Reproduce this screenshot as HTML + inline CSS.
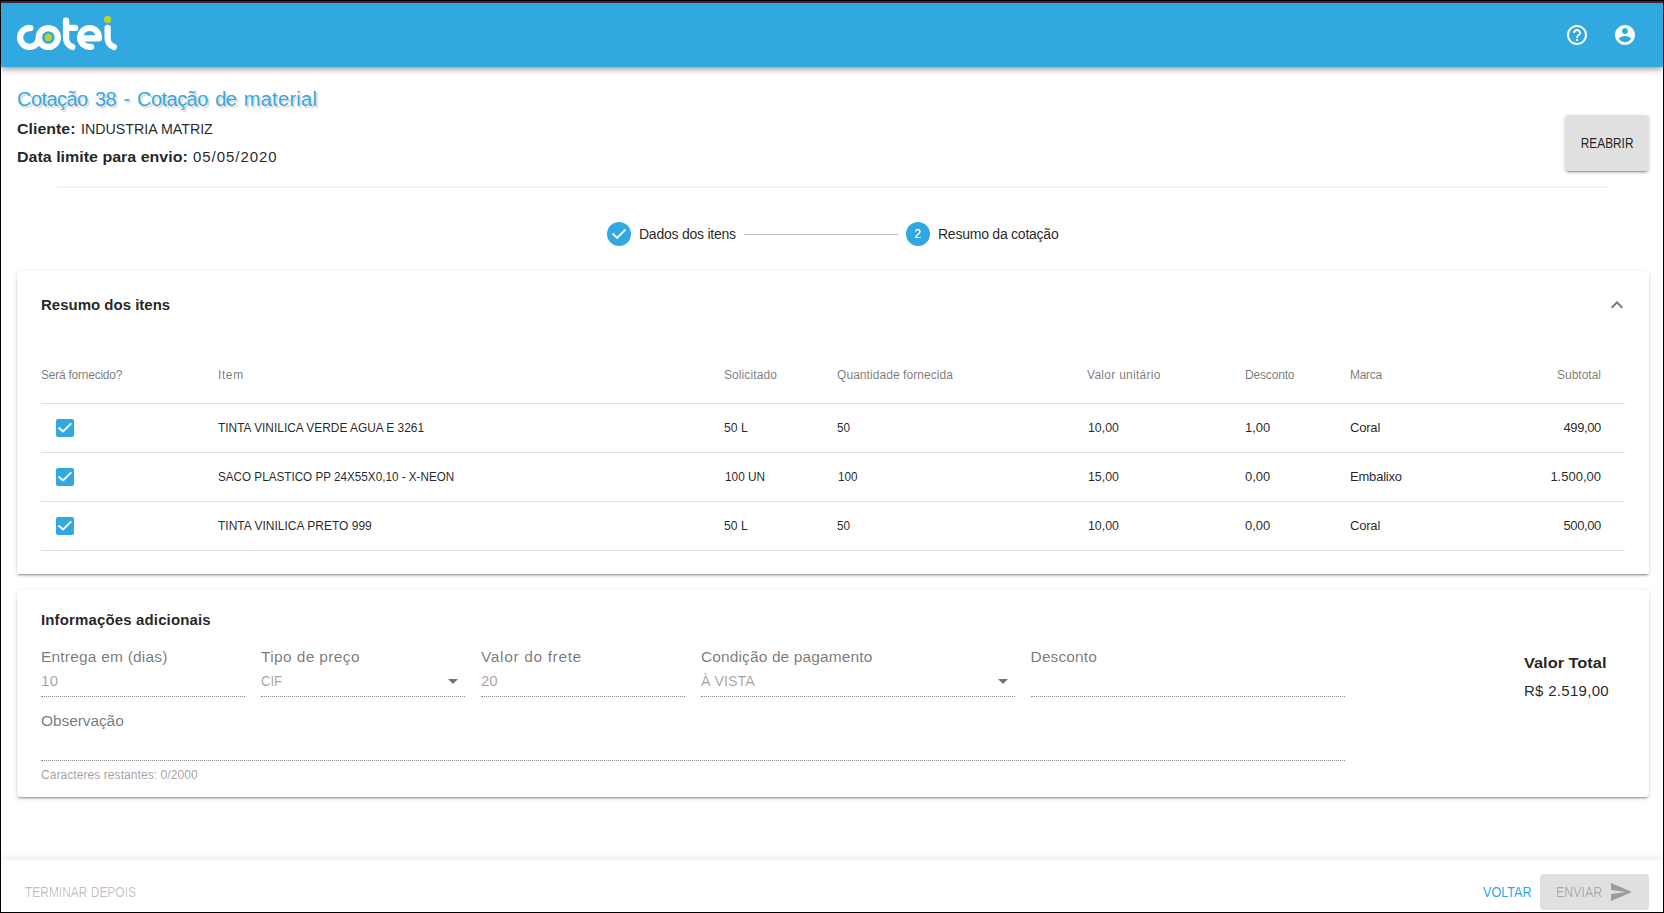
<!DOCTYPE html>
<html lang="pt-BR">
<head>
<meta charset="utf-8">
<title>Cotei - Cotação 38</title>
<style>
*{box-sizing:border-box;margin:0;padding:0}
html,body{width:1664px;height:913px;overflow:hidden;background:#fff}
body{position:relative;font-family:"Liberation Sans",sans-serif;color:rgba(0,0,0,.87);-webkit-font-smoothing:antialiased}
.abs{position:absolute}
.t{position:absolute;white-space:nowrap;line-height:20px;height:20px;transform-origin:0 50%}
/* window frame */
.fr{position:absolute;background:#000;z-index:50}
/* header */
#hdr{position:absolute;left:1px;top:3px;width:1662px;height:64px;background:#31a9e0;z-index:10;
 box-shadow:0 2px 4px -1px rgba(0,0,0,.2),0 4px 5px 0 rgba(0,0,0,.14),0 1px 10px 0 rgba(0,0,0,.12)}
#hdr svg{position:absolute}
/* title */
h1{font-weight:400;font-size:20px;color:#35a8e0;text-shadow:2px 2px 1px rgba(0,0,0,.16)}
.f15{font-size:15px}.f14{font-size:14px}.f13{font-size:13px}.f12{font-size:12px}.f16{font-size:16px}
b{font-weight:700}
hr{position:absolute;left:57px;top:186px;width:1552px;height:2px;border:0;background:#f3f3f3}
.btn{position:absolute;background:#e0e0e0;border-radius:4px;font-size:14px;text-align:center}
#reabrir{left:1565px;top:115px;width:84px;height:56px;line-height:56px;
 box-shadow:0 3px 1px -2px rgba(0,0,0,.2),0 2px 2px 0 rgba(0,0,0,.14),0 1px 5px 0 rgba(0,0,0,.12)}
/* stepper */
.dot{position:absolute;width:24px;height:24px;border-radius:50%;background:#31a9e0;color:#fff;text-align:center;font-size:12px;line-height:24px}
.sline{position:absolute;left:744px;top:234px;width:154px;height:1px;background:#bdbdbd}
/* cards */
.card{position:absolute;left:17px;width:1632px;background:#fff;border-radius:4px;
 box-shadow:0 3px 1px -2px rgba(0,0,0,.2),0 2px 2px 0 rgba(0,0,0,.14),0 1px 5px 0 rgba(0,0,0,.12)}
#c1{top:271px;height:303px;border-radius:4px 4px 1px 1px}
#c2{top:590px;height:207px}
#c2 .in{position:absolute;left:0;top:1px;width:1632px;height:206px}
.card .t,.card .abs,.card svg{position:absolute}
/* table */
table{position:absolute;left:24px;top:76px;width:1584px;border-collapse:collapse;table-layout:fixed}
th{height:56px;font-weight:400;font-size:12px;color:rgba(0,0,0,.54);text-align:left;border-bottom:1px solid #dfdfdf;padding:0;white-space:nowrap}
td{height:49px;font-size:13px;text-align:left;border-bottom:1px solid #dfdfdf;padding:0;white-space:nowrap}
th.r,td.r{text-align:right;padding-right:24px}
.cb{display:block;width:18px;height:18px;margin-left:15px;border-radius:2px;background:#31a9e0}
.cb svg{position:static;display:block}
.s{display:inline-block;transform-origin:0 50%;white-space:nowrap}
.r .s{transform-origin:100% 50%}
/* form */
.lbl{color:rgba(0,0,0,.54);font-size:15.5px}
.val{color:rgba(0,0,0,.38);font-size:15px}
.ul{position:absolute;height:0;border-top:1px dotted rgba(0,0,0,.45)}
.arr{position:absolute;width:0;height:0;border-left:5px solid transparent;border-right:5px solid transparent;border-top:5px solid rgba(0,0,0,.54)}
/* footer */
#ftr{position:absolute;left:1px;top:860px;width:1662px;height:52px;background:#fff;box-shadow:0 -2px 8px rgba(0,0,0,.09)}
</style>
</head>
<body>
<!-- window frame -->
<div class="fr" style="left:0;top:0;width:1664px;height:1px"></div>
<div class="fr" style="left:0;top:1px;width:1664px;height:1px;background:#3d2845"></div>
<div class="fr" style="left:0;top:2px;width:1664px;height:1px;background:#42213b"></div>
<div class="fr" style="left:0;top:0;width:1px;height:913px"></div>
<div class="fr" style="left:1663px;top:0;width:1px;height:913px"></div>
<div class="fr" style="left:0;top:912px;width:1664px;height:1px"></div>

<header id="hdr">
 <svg id="logo" style="left:0;top:0" width="130" height="64" viewBox="1 3 130 64" fill="none" stroke="#fff" stroke-width="6.300" stroke-linecap="round" stroke-linejoin="round">
  <path d="M30.320 28.040A9.400 9.400 0 1 0 38.900 37.400"/>
  <circle cx="48.350" cy="37.500" r="9.450"/>
  <path d="M66.050 20.750V38A9.450 9.450 0 0 0 72.270 46.880"/>
  <path d="M66.050 27.950H75.050"/>
  <path d="M80.500 38.400H98.950A9.450 9.450 0 1 0 91.190 46.760" stroke-width="6.100"/>
  <path d="M107.600 27.850V38A9.450 9.450 0 0 0 113.820 46.880"/>
  <circle cx="48.350" cy="37.500" r="3.650" fill="#b9d133" stroke="none"/>
  <circle cx="107.600" cy="19.400" r="3.600" fill="#b9d133" stroke="none"/>
 </svg>
 <svg style="left:1564px;top:20px" width="24" height="24" viewBox="0 0 24 24" fill="#fff"><path d="M11 18h2v-2h-2v2zm1-16C6.48 2 2 6.48 2 12s4.48 10 10 10 10-4.48 10-10S17.52 2 12 2zm0 18c-4.41 0-8-3.59-8-8s3.590-8 8-8 8 3.590 8 8-3.590 8-8 8zm0-14c-2.210 0-4 1.790-4 4h2c0-1.100.9-2 2-2s2 .9 2 2c0 2-3 1.750-3 5h2c0-2.250 3-2.500 3-5 0-2.210-1.790-4-4-4z"/></svg>
 <svg style="left:1612px;top:20px" width="24" height="24" viewBox="0 0 24 24" fill="#fff"><path d="M12 2C6.48 2 2 6.48 2 12s4.48 10 10 10 10-4.48 10-10S17.52 2 12 2zm0 3c1.660 0 3 1.340 3 3s-1.340 3-3 3-3-1.340-3-3 1.340-3 3-3zm0 14.200c-2.500 0-4.710-1.280-6-3.220.03-1.990 4-3.080 6-3.080 1.990 0 5.970 1.090 6 3.080-1.290 1.940-3.500 3.220-6 3.220z"/></svg>
</header>

<main>
 <h1 class="t" style="left:17px;top:89px;letter-spacing:-.55px;word-spacing:2.4px">Cotação 38 - Cotação de <span style="letter-spacing:.3px">material</span></h1>
 <div class="t f15" style="left:17px;top:119px"><b class="s" style="transform:scaleX(1.063)">Cliente:</b></div>
 <div class="t f15" style="left:81px;top:119px"><span class="s" style="transform:scaleX(.949)">INDUSTRIA MATRIZ</span></div>
 <div class="t f15" style="left:17px;top:147px"><b class="s" style="transform:scaleX(1.067)">Data limite para envio:</b></div>
 <div class="t f15" style="left:193px;top:147px"><span class="s" style="letter-spacing:.95px">05/05/2020</span></div>
 <div class="btn" id="reabrir"><span class="s" style="transform-origin:50% 50%;transform:scaleX(.846)">REABRIR</span></div>
 <hr>

 <!-- stepper -->
 <div class="dot" style="left:607px;top:222px"><svg width="24" height="24" viewBox="0 0 24 24" fill="none" stroke="#fff" stroke-width="1.9" style="position:absolute;left:0;top:0"><path d="M5.500 11.500L10.100 15.900 18.500 7.500"/></svg></div>
 <div class="t f14" style="left:639px;top:224px;letter-spacing:-.24px">Dados dos itens</div>
 <div class="sline"></div>
 <div class="dot" style="left:906px;top:222px;font-size:13px;line-height:23px"><span class="s" style="transform-origin:50% 50%;transform:scaleX(.88);text-shadow:0 0 .5px #fff">2</span></div>
 <div class="t f14" style="left:938px;top:224px;letter-spacing:-.24px">Resumo da cotação</div>

 <!-- card 1 -->
 <section class="card" id="c1">
  <div class="t f15" style="left:24px;top:24px"><b>Resumo dos itens</b></div>
  <svg style="left:1588px;top:22px" width="24" height="24" viewBox="0 0 24 24" fill="rgba(0,0,0,.54)"><path d="M7.410 15.410L12 10.830l4.590 4.580L18 14l-6-6-6 6z"/></svg>
  <table>
   <colgroup><col style="width:177px"><col style="width:506px"><col style="width:113px"><col style="width:250px"><col style="width:158px"><col style="width:105px"><col style="width:100px"><col style="width:175px"></colgroup>
   <thead><tr><th><span class="s" style="letter-spacing:-.24px">Será fornecido?</span></th><th><span class="s" style="letter-spacing:.6px">Item</span></th><th><span class="s" style="letter-spacing:.09px">Solicitado</span></th><th><span class="s" style="letter-spacing:.06px">Quantidade fornecida</span></th><th><span class="s" style="letter-spacing:.28px">Valor unitário</span></th><th><span class="s" style="letter-spacing:-.17px">Desconto</span></th><th><span class="s" style="letter-spacing:-.3px">Marca</span></th><th class="r"><span class="s">Subtotal</span></th></tr></thead>
   <tbody>
    <tr><td><span class="cb"><svg width="18" height="18" viewBox="0 0 18 18" fill="none" stroke="#fff" stroke-width="1.9"><path d="M2.500 8.500L7.050 12.500 15.300 4.400"/></svg></span></td><td><span class="s" style="transform:scaleX(.915)">TINTA VINILICA VERDE AGUA E 3261</span></td><td><span class="s" style="transform:scaleX(.936)">50 L</span></td><td><span class="s" style="transform:scaleX(.9)">50</span></td><td><span class="s" style="margin-left:1px;transform:scaleX(.95)">10,00</span></td><td><span class="s">1,00</span></td><td><span class="s" style="letter-spacing:-.2px">Coral</span></td><td class="r"><span class="s" style="letter-spacing:-.36px">499,00</span></td></tr>
    <tr><td><span class="cb"><svg width="18" height="18" viewBox="0 0 18 18" fill="none" stroke="#fff" stroke-width="1.9"><path d="M2.500 8.500L7.050 12.500 15.300 4.400"/></svg></span></td><td><span class="s" style="transform:scaleX(.899)">SACO PLASTICO PP 24X55X0,10 - X-NEON</span></td><td><span class="s" style="margin-left:1px;transform:scaleX(.91)">100 UN</span></td><td><span class="s" style="margin-left:1px;transform:scaleX(.9)">100</span></td><td><span class="s" style="margin-left:1px;transform:scaleX(.95)">15,00</span></td><td><span class="s">0,00</span></td><td><span class="s" style="letter-spacing:-.2px">Embalixo</span></td><td class="r"><span class="s">1.500,00</span></td></tr>
    <tr><td><span class="cb"><svg width="18" height="18" viewBox="0 0 18 18" fill="none" stroke="#fff" stroke-width="1.9"><path d="M2.500 8.500L7.050 12.500 15.300 4.400"/></svg></span></td><td><span class="s" style="transform:scaleX(.924)">TINTA VINILICA PRETO 999</span></td><td><span class="s" style="transform:scaleX(.936)">50 L</span></td><td><span class="s" style="transform:scaleX(.9)">50</span></td><td><span class="s" style="margin-left:1px;transform:scaleX(.95)">10,00</span></td><td><span class="s">0,00</span></td><td><span class="s" style="letter-spacing:-.2px">Coral</span></td><td class="r"><span class="s" style="letter-spacing:-.36px">500,00</span></td></tr>
   </tbody>
  </table>
 </section>

 <!-- card 2 -->
 <section class="card" id="c2">
 <div class="in">
  <div class="t f15" style="left:24px;top:19px;letter-spacing:.14px"><b>Informações adicionais</b></div>

  <div class="t lbl" style="left:24px;top:56px;letter-spacing:.2px">Entrega em (dias)</div>
  <div class="t val" style="left:24px;top:80px;letter-spacing:.4px">10</div>
  <div class="ul" style="left:24px;top:105px;width:204px"></div>

  <div class="t lbl" style="left:244px;top:56px;letter-spacing:.36px">Tipo de preço</div>
  <div class="t val" style="left:244px;top:80px;transform:scaleX(.871)">CIF</div>
  <div class="arr" style="left:431px;top:88px"></div>
  <div class="ul" style="left:244px;top:105px;width:204px"></div>

  <div class="t lbl" style="left:464px;top:56px;letter-spacing:.64px">Valor do frete</div>
  <div class="t val" style="left:464px;top:80px">20</div>
  <div class="ul" style="left:464px;top:105px;width:204px"></div>

  <div class="t lbl" style="left:684px;top:56px;letter-spacing:.12px">Condição de pagamento</div>
  <div class="t val" style="left:684px;top:80px;transform:scaleX(.951)">À VISTA</div>
  <div class="arr" style="left:981px;top:88px"></div>
  <div class="ul" style="left:684px;top:105px;width:314px"></div>

  <div class="t lbl" style="left:1013.6px;top:56px;letter-spacing:.1px">Desconto</div>
  <div class="ul" style="left:1014px;top:105px;width:314px"></div>

  <div class="t lbl" style="left:24px;top:120px;letter-spacing:-.09px">Observação</div>
  <div class="ul" style="left:24px;top:169px;width:1304px"></div>
  <div class="t f12" style="left:24px;top:174px;color:rgba(0,0,0,.4);letter-spacing:.07px">Caracteres restantes: 0/2000</div>

  <div class="t f15" style="left:1507px;top:62px;transform:scaleX(1.091)"><b>Valor Total</b></div>
  <div class="t f15" style="left:1507px;top:90px;letter-spacing:.29px">R$ 2.519,00</div>
 </div>
 </section>
</main>

<footer id="ftr">
 <div class="t f14" style="left:24px;top:22px;color:rgba(0,0,0,.26);transform:scaleX(.854)">TERMINAR DEPOIS</div>
 <div class="t f14" style="left:1482px;top:22px;color:#31a9e0;transform:scaleX(.902)">VOLTAR</div>
 <div class="btn" style="left:1539px;top:14px;width:109px;height:36px">
  <div class="t f14" style="left:16px;top:8px;color:rgba(0,0,0,.26);transform:scaleX(.884)">ENVIAR</div>
  <svg style="position:absolute;left:69px;top:6px" width="24" height="24" viewBox="0 0 24 24" fill="rgba(0,0,0,.3)"><path d="M2.010 21L23 12 2.010 3 2 10l15 2-15 2z"/></svg>
 </div>
</footer>
</body>
</html>
